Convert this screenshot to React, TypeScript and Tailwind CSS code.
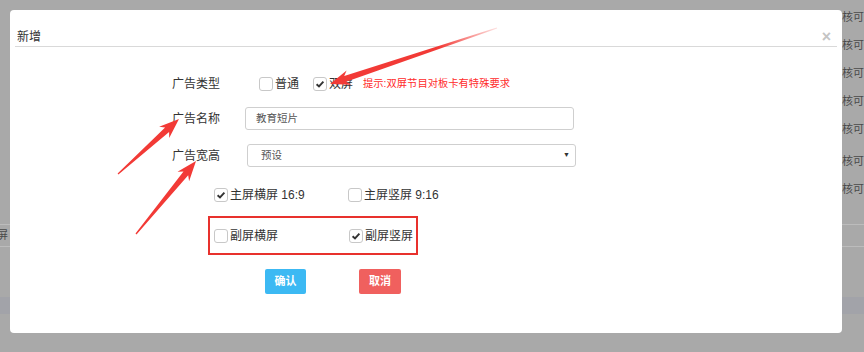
import React from "react";

type Pt = [number, number];

// red annotation arrow: tapered shaft + triangular head
const arrowPoints = (tail: Pt, tip: Pt, headLen = 20, headHalf = 7.5, neckHalf = 3, tailHalf = 0.6) => {
  const dx = tip[0] - tail[0];
  const dy = tip[1] - tail[1];
  const len = Math.hypot(dx, dy);
  const ux = dx / len;
  const uy = dy / len;
  const nx = -uy;
  const ny = ux;
  const neck: Pt = [tip[0] - ux * headLen, tip[1] - uy * headLen];
  const back: Pt = [tip[0] - ux * (headLen - 4), tip[1] - uy * (headLen - 4)];
  const pts: Pt[] = [
    [tail[0] + nx * tailHalf, tail[1] + ny * tailHalf],
    [back[0] + nx * neckHalf, back[1] + ny * neckHalf],
    [neck[0] + nx * headHalf, neck[1] + ny * headHalf],
    tip,
    [neck[0] - nx * headHalf, neck[1] - ny * headHalf],
    [back[0] - nx * neckHalf, back[1] - ny * neckHalf],
    [tail[0] - nx * tailHalf, tail[1] - ny * tailHalf],
  ];
  return pts.map((p) => `${p[0].toFixed(1)},${p[1].toFixed(1)}`).join(" ");
};

const Checkbox = ({checked}: {checked?: boolean}) => (
  <span className="flex h-[14px] w-[14px] shrink-0 items-center justify-center rounded-[3px] border border-[#c8c8c8] bg-white">
    {checked && (
      <svg width="10" height="10" viewBox="0 0 10 10">
        <path d="M1.6 5.2 L4 7.4 L8.4 2.6" fill="none" stroke="#333" strokeWidth="1.9" />
      </svg>
    )}
  </span>
);

const CheckItem = ({label, checked, className = ""}: {label: string; checked?: boolean; className?: string}) => (
  <label className={`flex items-center gap-[2px] whitespace-nowrap text-[12px] leading-[14px] text-[#333] ${className}`}>
    <Checkbox checked={checked} />
    <span>{label}</span>
  </label>
);

const Label = ({children}: {children: React.ReactNode}) => (
  <div className="w-[210px] shrink-0 text-right text-[12px] leading-[14px] text-[#333]">{children}</div>
);

const sideRows = [17, 45, 73, 101, 129, 161, 189];

export default function App() {
  return (
    <div className="relative h-[352px] w-[864px] overflow-hidden bg-[#a9a9a9] font-['Liberation_Sans','Noto_Sans_CJK_SC',sans-serif]">
      {/* page behind the dialog */}
      <div className="flex h-full flex-col">
        <div className="flex flex-col items-end">
          {sideRows.map((y, i) => (
            <div
              key={y}
              className={`w-[22px] overflow-hidden whitespace-nowrap text-[11px] leading-[14px] text-[#4a4a4a] ${i === 0 ? "mt-[10px]" : i === 5 ? "mt-[18px]" : "mt-[14px]"}`}
            >
              核可定
            </div>
          ))}
        </div>
        <div className="mt-[28px] flex h-[23px] items-center border-y border-[#bcbcbc]">
          <span className="ml-[-14px] text-[11px] text-[#4a4a4a]">竖屏</span>
        </div>
        <div className="mt-[50px] h-[17px] bg-[#a2a3a9]" />
      </div>

      {/* dialog */}
      <div className="absolute left-[10px] top-[10px] flex h-[323px] w-[832px] flex-col rounded-[4px] bg-white">
        <div className="mx-[5px] flex items-center justify-between border-b border-[#d9d9d9] pb-[2px] pt-[20px]">
          <span className="pl-[2px] text-[12px] leading-[14px] text-[#333]">新增</span>
          <span className="pr-[6px] text-[16px] font-bold leading-[14px] text-[#c4c4c4]">×</span>
        </div>

        <div className="flex flex-col">
          <div className="mt-[27px] flex h-[20px] items-center">
            <Label>广告类型</Label>
            <CheckItem label="普通" className="ml-[39px]" />
            <CheckItem label="双屏" checked className="ml-[14px]" />
            <span className="ml-[10px] text-[10.3px] leading-[14px] text-[#ff2b2b]">提示:双屏节目对板卡有特殊要求</span>
          </div>

          <div className="mt-[13px] flex items-center">
            <Label>广告名称</Label>
            <div className="ml-[25px] flex h-[23px] w-[329px] items-center rounded-[3px] border border-[#cfcfcf] pl-[10px] text-[10.5px] text-[#555]">
              教育短片
            </div>
          </div>

          <div className="mt-[14px] flex items-center">
            <Label>广告宽高</Label>
            <div className="ml-[27px] flex h-[23px] w-[329px] items-center justify-between rounded-[3px] border border-[#cfcfcf] pl-[13px] pr-[5px] text-[10.5px] text-[#555]">
              <span>预设</span>
              <span className="text-[7px] text-[#333]">▼</span>
            </div>
          </div>

          <div className="ml-[204px] mt-[21px] flex">
            <CheckItem label="主屏横屏 16:9" checked className="w-[134px]" />
            <CheckItem label="主屏竖屏 9:16" />
          </div>

          <div className="ml-[198px] mt-[14px] flex h-[39px] w-[210px] items-center border-2 border-[#e8312d] pl-[4px]">
            <CheckItem label="副屏横屏" className="w-[135px]" />
            <CheckItem label="副屏竖屏" checked />
          </div>

          <div className="ml-[255px] mt-[14px] flex gap-[53px]">
            <button className="h-[25px] w-[41px] rounded-[2px] bg-[#3cb9f3] text-[11px] font-bold text-white">确认</button>
            <button className="h-[25px] w-[42px] rounded-[2px] bg-[#f0605e] text-[11px] font-bold text-white">取消</button>
          </div>
        </div>
      </div>

      {/* annotation arrows */}
      <svg className="pointer-events-none absolute left-0 top-0" width="864" height="352">
        <defs>
          <linearGradient id="fade" gradientUnits="userSpaceOnUse" x1="497" y1="28" x2="330" y2="84">
            <stop offset="0" stopColor="#f23a36" stopOpacity="0.15" />
            <stop offset="0.35" stopColor="#f23a36" stopOpacity="1" />
            <stop offset="1" stopColor="#f23a36" stopOpacity="1" />
          </linearGradient>
        </defs>
        <polygon points={arrowPoints([497, 28], [330, 84])} fill="url(#fade)" />
        <polygon points={arrowPoints([118, 174], [179, 119])} fill="#f23a36" />
        <polygon points={arrowPoints([136, 234], [196, 161])} fill="#f23a36" />
      </svg>
    </div>
  );
}
